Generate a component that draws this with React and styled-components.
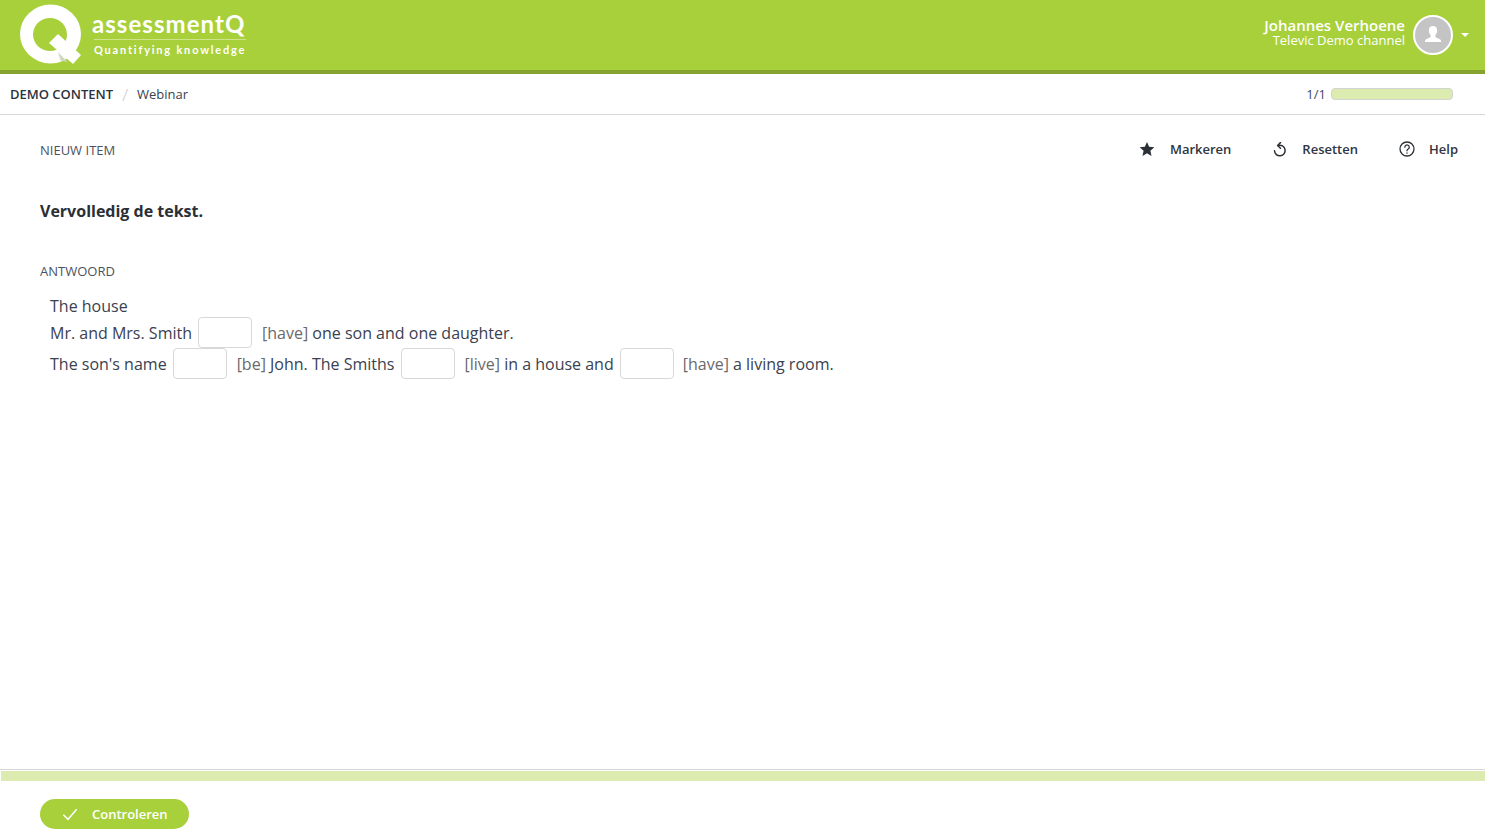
import React from 'react';
import styled, { createGlobalStyle } from 'styled-components';

const GlobalStyle = createGlobalStyle`
  html, body { margin: 0; padding: 0; height: 100%; background: #fff; }
  body { font-family: "Open Sans", "Liberation Sans", sans-serif; color: #2f3542; overflow: hidden; }
`;

const Page = styled.div`
  display: flex;
  flex-direction: column;
  height: 838px;
`;

const Header = styled.header`
  flex: none;
  height: 70px;
  display: flex;
  align-items: center;
  justify-content: space-between;
  background: #a8d03a;
  border-bottom: 4px solid #86a22f;
  color: #fff;
`;

const Logo = styled.div`
  display: flex;
  align-items: flex-start;
  height: 70px;
  padding-left: 19px;
`;

const LogoMark = styled.svg`
  width: 64px;
  height: 70px;
  flex: none;
`;

const LogoWords = styled.div`
  margin-left: 9px;
  padding-top: 10px;
  width: 154px;
`;

const LogoName = styled.div`
  font-family: Lato, "Open Sans", sans-serif;
  font-size: 24px;
  line-height: 28px;
  letter-spacing: 1.05px;
  font-weight: 700;
  white-space: nowrap;
`;

const LogoTag = styled.div`
  margin: 1px 0 0 2px;
  padding-top: 3px;
  border-top: 1px solid #cfe48a;
  font-family: Lato, "Open Sans", sans-serif;
  font-size: 11px;
  font-weight: 700;
  line-height: 14px;
  letter-spacing: 1.8px;
  white-space: nowrap;
`;

const User = styled.div`
  display: flex;
  align-items: center;
  padding-right: 16px;
`;

const UserText = styled.div`
  text-align: right;
  margin: 0 8px 7px 0;
`;

const UserName = styled.div`
  font-size: 15px;
  font-weight: 600;
  line-height: 16px;
`;

const UserChannel = styled.div`
  font-size: 13px;
  line-height: 14px;
`;

const Avatar = styled.div`
  width: 36px;
  height: 36px;
  border: 2px solid #fff;
  border-radius: 50%;
  background: #c4c4c4;
  display: flex;
  align-items: center;
  justify-content: center;
`;

const Caret = styled.span`
  margin-left: 8px;
  width: 0;
  height: 0;
  border-left: 4px solid transparent;
  border-right: 4px solid transparent;
  border-top: 4px solid #fff;
`;

const Crumbs = styled.nav`
  flex: none;
  height: 40px;
  display: flex;
  align-items: center;
  padding: 0 32px 0 10px;
  border-bottom: 1px solid #d9d9d9;
  font-size: 13px;
`;

const CrumbRoot = styled.span`
  font-weight: 600;
  color: #2b3240;
`;

const CrumbSep = styled.span`
  margin: 0 9px;
  color: #c8c8c8;
  font-size: 17px;
  font-weight: 300;
`;

const CrumbLeaf = styled.span`
  color: #3a4150;
`;

const Progress = styled.div`
  margin-left: auto;
  display: flex;
  align-items: center;
  gap: 5px;
  color: #3d4a6b;
`;

const ProgressTrack = styled.div`
  width: 120px;
  height: 10px;
  border: 1px solid #d3d3d3;
  border-radius: 4px;
  background: #dcebb0;
`;

const Main = styled.main`
  flex: 1;
  padding: 0 27px 0 40px;
`;

const ItemBar = styled.div`
  display: flex;
  align-items: center;
  justify-content: space-between;
  height: 70px;
`;

const SmallLabel = styled.div`
  font-size: 13px;
  line-height: 17px;
  color: #4a5260;
`;

const Tools = styled.div`
  display: flex;
  align-items: center;
  gap: 41px;
  margin-top: -2px;
`;

const Tool = styled.div`
  display: flex;
  align-items: center;
  gap: ${({ $gap }) => $gap}px;
  font-size: 13px;
  font-weight: 600;
  color: #2f3542;
`;

const Prompt = styled.h1`
  margin: 17px 0 0;
  font-size: 16px;
  line-height: 18px;
  font-weight: 700;
  color: #2b2f36;
`;

const AnswerLabel = styled(SmallLabel)`
  margin-top: 43px;
`;

const Answer = styled.div`
  margin-top: 14px;
  padding-left: 10px;
  font-size: 16px;
  color: #3a4150;
`;

const Line = styled.div`
  display: flex;
  align-items: center;
  height: ${({ $h }) => $h}px;
  white-space: pre;
`;

const Gap = styled.input`
  box-sizing: border-box;
  width: 54px;
  height: 31px;
  margin: 0 ${({ $right }) => $right || 10}px 0 ${({ $left }) => $left || 6}px;
  padding: 0;
  border: 1px solid #d8d8d8;
  border-radius: 4px;
  background: #fff;
`;

const Hint = styled.span`
  color: #6a6a6a;
`;

const Footer = styled.footer`
  flex: none;
  height: 68px;
  border-top: 1px solid #d6d6d6;
`;

const FooterBar = styled.div`
  height: 10px;
  margin: 1px 0 0 1px;
  background: #dcebb0;
`;

const CheckButton = styled.button`
  display: flex;
  align-items: center;
  gap: 14px;
  width: 149px;
  height: 30px;
  margin: 18px 0 0 40px;
  padding: 0 0 0 22px;
  border: 0;
  border-radius: 15px;
  background: #a8d03a;
  color: #fff;
  font-family: inherit;
  font-size: 13px;
  font-weight: 600;
`;

const App = () => (
  <Page>
    <GlobalStyle />
    <Header>
      <Logo>
        <LogoMark viewBox="0 0 64 70">
          <path
            fillRule="evenodd"
            fill="#fff"
            d="M31.500 4.500a30.500 29.500 0 1 0 0 59a30.500 29.500 0 1 0 0-59zM31 18a17 16.500 0 1 1 0 33a17 16.500 0 1 1 0-33z"
          />
          <path fill="#fff" d="M30 43l9-9l23 21l-8 9z" />
          <path fill="#cfd8c4" d="M39 52l9.500 10l-7-1.500z" />
        </LogoMark>
        <LogoWords>
          <LogoName>assessmentQ</LogoName>
          <LogoTag>Quantifying knowledge</LogoTag>
        </LogoWords>
      </Logo>
      <User>
        <UserText>
          <UserName>Johannes Verhoene</UserName>
          <UserChannel>Televic Demo channel</UserChannel>
        </UserText>
        <Avatar>
          <svg width="20" height="20" viewBox="0 0 20 20" fill="#fff">
            <path d="M10 1c2.800 0 4.200 2 4.200 4.500c0 2-.9 3.700-1.900 4.700v1.300c0 .9 1.200 1.300 3 2c1.600.6 2.700 1.200 2.700 2.500v1H2v-1c0-1.300 1.100-1.900 2.700-2.500c1.800-.7 3-1.100 3-2v-1.300c-1-1-1.900-2.700-1.900-4.700C5.800 3 7.200 1 10 1z" />
          </svg>
        </Avatar>
        <Caret />
      </User>
    </Header>
    <Crumbs>
      <CrumbRoot>DEMO CONTENT</CrumbRoot>
      <CrumbSep>/</CrumbSep>
      <CrumbLeaf>Webinar</CrumbLeaf>
      <Progress>
        1/1
        <ProgressTrack />
      </Progress>
    </Crumbs>
    <Main>
      <ItemBar>
        <SmallLabel>NIEUW ITEM</SmallLabel>
        <Tools>
          <Tool $gap={15}>
            <svg width="16" height="16" viewBox="0 0 24 24" fill="#2b2f36">
              <path d="M12 1.500l3.200 7.200l7.800.8l-5.900 5.200l1.700 7.700L12 18.400l-6.800 4l1.700-7.700L1 9.500l7.800-.8z" />
            </svg>
            Markeren
          </Tool>
          <Tool $gap={15}>
            <svg width="15" height="15" viewBox="0 0 24 24" fill="none" stroke="#2b2f36" strokeWidth="2.400" strokeLinecap="round" strokeLinejoin="round">
              <path d="M10 5.500A8.500 8.500 0 1 1 4 14" />
              <path d="M13.500 1L9 5.500L13.500 10" />
            </svg>
            Resetten
          </Tool>
          <Tool $gap={14}>
            <svg width="16" height="16" viewBox="0 0 24 24" fill="none" stroke="#2b2f36" strokeWidth="1.900" strokeLinecap="round">
              <circle cx="12" cy="12" r="10.500" />
              <path d="M8.800 9.300a3.300 3.300 0 1 1 5 2.800c-1.200.7-1.800 1.300-1.800 2.600" />
              <path d="M12 18v.2" />
            </svg>
            Help
          </Tool>
        </Tools>
      </ItemBar>
      <Prompt>Vervolledig de tekst.</Prompt>
      <AnswerLabel>ANTWOORD</AnswerLabel>
      <Answer>
        <Line $h={23}>The house</Line>
        <Line $h={31}>
          Mr. and Mrs. Smith
          <Gap />
          <Hint>[have]</Hint> one son and one daughter.
        </Line>
        <Line $h={31}>
          The son's name
          <Gap />
          <Hint>[be]</Hint> John. The Smiths
          <Gap $left={7} $right={9} />
          <Hint>[live]</Hint> in a house and
          <Gap $right={9} />
          <Hint>[have]</Hint> a living room.
        </Line>
      </Answer>
    </Main>
    <Footer>
      <FooterBar />
      <CheckButton type="button">
        <svg width="16" height="16" viewBox="0 0 24 24" fill="none" stroke="#fff" strokeWidth="2.200">
          <path d="M2 13l7 7L22 5" />
        </svg>
        Controleren
      </CheckButton>
    </Footer>
  </Page>
);

export default App;
